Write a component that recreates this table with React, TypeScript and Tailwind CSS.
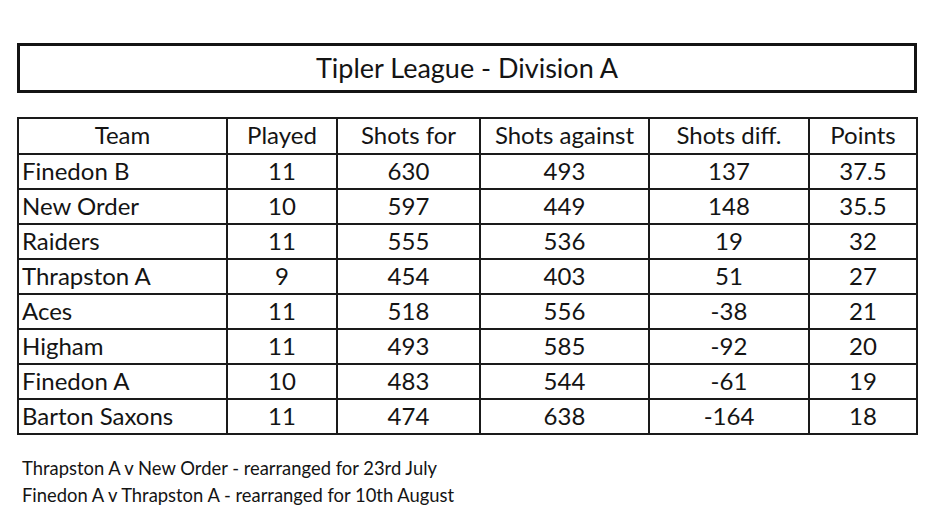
const rows = [
  ['Finedon B', '11', '630', '493', '137', '37.5'],
  ['New Order', '10', '597', '449', '148', '35.5'],
  ['Raiders', '11', '555', '536', '19', '32'],
  ['Thrapston A', '9', '454', '403', '51', '27'],
  ['Aces', '11', '518', '556', '-38', '21'],
  ['Higham', '11', '493', '585', '-92', '20'],
  ['Finedon A', '10', '483', '544', '-61', '19'],
  ['Barton Saxons', '11', '474', '638', '-164', '18'],
];

const headers = ['Team', 'Played', 'Shots for', 'Shots against', 'Shots diff.', 'Points'];
const widths = ['w-[209px]', 'w-[110px]', 'w-[143px]', 'w-[169px]', 'w-[160px]', 'w-[108px]'];

export default function App() {
  return (
    <main className="min-h-screen w-[934px] h-[521px] bg-white text-[#141414] font-['Lato',sans-serif] overflow-hidden">
      <div className="ml-[17px] w-[900px] pt-[43px]">
        {/* Title box */}
        <div className="h-[50px] border-[3px] border-[#141414] flex items-center justify-center pb-[2px] text-[27px] leading-none">
          Tipler League - Division A
        </div>

        {/* League table */}
        <table className="mt-[24px] w-[900px] table-fixed border-collapse text-[24px] leading-none">
          <colgroup>
            {widths.map((w, i) => (
              <col key={i} className={w} />
            ))}
          </colgroup>
          <thead>
            <tr className="h-[36px]">
              {headers.map((h) => (
                <th key={h} className="border-2 border-[#1a1a1a] font-normal text-center px-1 pb-[2px]">
                  {h}
                </th>
              ))}
            </tr>
          </thead>
          <tbody>
            {rows.map((r) => (
              <tr key={r[0]} className="h-[35px]">
                {r.map((c, i) => (
                  <td
                    key={i}
                    className={
                      i === 0
                        ? 'border-2 border-[#1a1a1a] text-left pl-[3px] pb-[2px]'
                        : 'border-2 border-[#1a1a1a] text-center pb-[2px]'
                    }
                  >
                    {c}
                  </td>
                ))}
              </tr>
            ))}
          </tbody>
        </table>

        {/* Notes */}
        <div className="mt-[20px] pl-[5px] text-[18.4px] leading-[27px]">
          <p>Thrapston A v New Order - rearranged for 23rd July</p>
          <p>Finedon A v Thrapston A - rearranged for 10th August</p>
        </div>
      </div>
    </main>
  );
}
